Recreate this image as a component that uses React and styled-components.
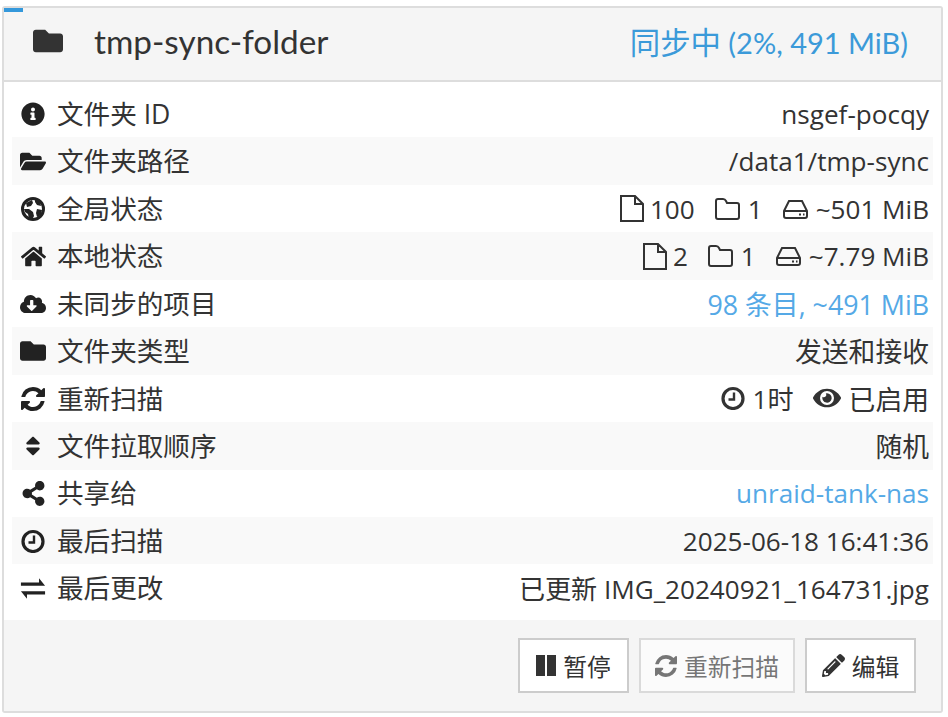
import React from "react"
import styled, { createGlobalStyle } from "styled-components"
import {
  FaInfoCircle, FaFolderOpen, FaHome, FaCloudDownloadAlt, FaFolder,
  FaSort, FaShareAlt, FaPencilAlt, FaEye,
} from "react-icons/fa"

const GlobalStyle = createGlobalStyle`
  html, body {
    margin: 0;
    background: #fff;
    font-family: "Open Sans", "Noto Sans CJK SC", sans-serif;
    color: #333;
  }
`

const Panel = styled.div`
  position: relative;
  box-sizing: border-box;
  width: 941px;
  height: 707px;
  margin: 6px 0 0 2px;
  border: 2px solid #ddd;
  border-radius: 3px;
  display: flex;
  flex-direction: column;
`

const Progress = styled.div`
  position: absolute;
  left: 0;
  top: 0;
  width: 19px;
  height: 4px;
  background: #3498db;
`

const Header = styled.div`
  box-sizing: border-box;
  height: 74px;
  padding: 0 33px 7px 29px;
  background: #f5f5f5;
  border-bottom: 2px solid #ddd;
  display: flex;
  align-items: center;
  justify-content: space-between;
`

const Title = styled.div`
  display: flex;
  align-items: center;
  gap: 31px;
  font-family: Lato, "Noto Sans CJK SC", sans-serif;
  font-size: 33.300px;
  color: #333;
`

const Status = styled.div`
  font-family: Lato, "Noto Sans CJK SC", sans-serif;
  font-size: 29px;
  color: #3b9ad9;
`

const StatusWord = styled.span`
  font-size: 30.400px;
`

const Body = styled.div`
  flex: 1;
  padding: 8px;
`

const Row = styled.div`
  box-sizing: border-box;
  height: 47.450px;
  padding: 0 4px 0 8px;
  display: flex;
  align-items: center;
  justify-content: space-between;
  font-size: 26.100px;
  white-space: nowrap;
  &:nth-child(even) {
    background: #f9f9f9;
  }
`

const Label = styled.div`
  display: flex;
  align-items: center;
  font-size: 26.600px;
  line-height: 1;
  padding-top: 1px;
`

const IconSlot = styled.span`
  width: 26px;
  margin-right: 11px;
  flex: none;
  display: flex;
  justify-content: center;
  color: #222;
  svg { display: block; }
`

const Value = styled.div`
  display: flex;
  align-items: center;
  font-size: ${(p) => (p.$cjk ? "26.800px" : "inherit")};
  color: ${(p) => (p.$accent ? "#55a9e6" : "#333")};
`

const Stat = styled.span`
  display: inline-flex;
  align-items: center;
  gap: ${(p) => (p.$tight ? 6 : 8)}px;
  margin-left: ${(p) => p.$gap || 0}px;
  font-size: ${(p) => (p.$cjk ? "26.800px" : "inherit")};
  svg { display: block; }
`

const Footer = styled.div`
  box-sizing: border-box;
  height: 91px;
  padding: 18px 25px 0 0;
  background: #f5f5f5;
  display: flex;
  justify-content: flex-end;
  gap: 10px;
`

const Button = styled.div`
  box-sizing: border-box;
  height: 55px;
  width: ${(p) => p.$w}px;
  border: 2px solid #ccc;
  background: #fff;
  display: flex;
  align-items: center;
  justify-content: center;
  gap: 7px;
  font-size: 23.750px;
  color: #333;
  opacity: ${(p) => (p.$disabled ? 0.65 : 1)};
`

// FontAwesome 4 glyphs that react-icons no longer ships
const Refresh = ({ size = 24 }) => (
  <svg width={size} height={size} viewBox="0 0 1536 1536" fill="currentColor">
    <path d="M1511 928q0 5-1 7-64 268-268 434.500T764 1536q-146 0-282.500-55T238 1324l-129 129q-19 19-45 19t-45-19-19-45V960q0-26 19-45t45-19h448q26 0 45 19t19 45-19 45l-137 137q71 66 161 102t187 36q134 0 250-65t186-179q11-17 53-117 8-23 30-23h192q13 0 22.500 9.500t9.500 22.500zm25-800v448q0 26-19 45t-45 19h-448q-26 0-45-19t-19-45 19-45l138-138Q969 256 768 256q-134 0-250 65T332 500q-11 17-53 117-8 23-30 23H50q-13 0-22.500-9.500T18 608v-7q65-268 270-434.500T768 0q146 0 284 55.500T1297 212l130-129q19-19 45-19t45 19 19 45z" />
  </svg>
)

const Clock = ({ size = 24 }) => (
  <svg width={size} height={size} viewBox="0 0 24 24" fill="none" stroke="currentColor" strokeWidth="3.200">
    <circle cx="12" cy="12.500" r="10" />
    <path d="M13 6.500v7H7.500" strokeWidth="2.400" />
  </svg>
)

const Exchange = ({ size = 29 }) => (
  <svg width={size} height={size} viewBox="0 0 28 28" fill="currentColor">
    <path d="M1 17h26v3.500H7.500V25zM27 11H1V7.500h19.500V3z" />
  </svg>
)

const Globe = ({ size = 24 }) => (
  <svg width={size} height={size} viewBox="0 0 24 24">
    <circle cx="12" cy="12" r="10.500" fill="#fff" stroke="currentColor" strokeWidth="3" />
    <path fill="currentColor" d="M5 6l6-3 1 3-2 3-4 1zM14 2l5 3 1 4-4-1-2-3zM3 12l5 0 4 3 1 4-2 4-3-1-1-5-3-2zM16 12l5 1-1 5-4 2-1-4z" />
  </svg>
)

const FileOutline = ({ size = 27 }) => (
  <svg width={size - 3} height={size} viewBox="0 0 24 27" fill="none" stroke="currentColor" strokeWidth="2">
    <path d="M1 1h14l8 8v17H1zM15 1v8h8" />
  </svg>
)

const FolderOutline = ({ size = 25 }) => (
  <svg width={size} height={size - 3} viewBox="0 0 25 22" fill="none" stroke="currentColor" strokeWidth="2">
    <path d="M1 5V3q0-2 2-2h5q2 0 3 2l1 2h10q2 0 2 2v12q0 2-2 2H3q-2 0-2-2z" />
  </svg>
)

const Disk = ({ size = 25 }) => (
  <svg width={size} height={size - 5} viewBox="0 0 25 20" fill="none" stroke="currentColor" strokeWidth="2">
    <path d="M1 12 6 2h13l5 10v5q0 2-2 2H3q-2 0-2-2zM1 12h23" />
    <path d="M16 15.500h2M20 15.500h1.500" strokeWidth="2.200" />
  </svg>
)

const PauseBars = () => (
  <svg width="20" height="21" viewBox="0 0 20 21" fill="currentColor">
    <path d="M0 0h9v21H0zM11 0h9v21h-9z" />
  </svg>
)

const rows = [
  { icon: <FaInfoCircle size={24} />, label: "文件夹 ID", value: "nsgef-pocqy" },
  { icon: <FaFolderOpen size={29} />, label: "文件夹路径", value: "/data1/tmp-sync" },
  {
    icon: <Globe />,
    label: "全局状态",
    value: (
      <>
        <Stat $tight><FileOutline />100</Stat>
        <Stat $gap={20}><FolderOutline />1</Stat>
        <Stat $gap={20}><Disk />~501 MiB</Stat>
      </>
    ),
  },
  {
    icon: <FaHome size={25} />,
    label: "本地状态",
    value: (
      <>
        <Stat $tight><FileOutline />2</Stat>
        <Stat $gap={20}><FolderOutline />1</Stat>
        <Stat $gap={20}><Disk />~7.79 MiB</Stat>
      </>
    ),
  },
  { icon: <FaCloudDownloadAlt size={30} />, label: "未同步的项目", value: "98 条目, ~491 MiB", accent: true, cjk: true },
  { icon: <FaFolder size={26} />, label: "文件夹类型", value: "发送和接收", cjk: true },
  {
    icon: <Refresh />,
    label: "重新扫描",
    value: (
      <>
        <Stat><Clock />1时</Stat>
        <Stat $gap={19} $cjk><FaEye size={28} />已启用</Stat>
      </>
    ),
  },
  { icon: <FaSort size={24} />, label: "文件拉取顺序", value: "随机", cjk: true },
  { icon: <FaShareAlt size={25} />, label: "共享给", value: "unraid-tank-nas", accent: true },
  { icon: <Clock />, label: "最后扫描", value: "2025-06-18 16:41:36" },
  { icon: <Exchange />, label: "最后更改", value: "已更新 IMG_20240921_164731.jpg" },
]

export default function App() {
  return (
    <>
      <GlobalStyle />
      <Panel>
        <Progress />
        <Header>
          <Title>
            <FaFolder size={30} />
            tmp-sync-folder
          </Title>
          <Status><StatusWord>同步中</StatusWord> (2%, 491 MiB)</Status>
        </Header>
        <Body>
          {rows.map((r) => (
            <Row key={r.label}>
              <Label>
                <IconSlot>{r.icon}</IconSlot>
                {r.label}
              </Label>
              <Value $accent={r.accent} $cjk={r.cjk}>{r.value}</Value>
            </Row>
          ))}
        </Body>
        <Footer>
          <Button $w={111}><PauseBars />暂停</Button>
          <Button $w={156} $disabled><Refresh size={22} />重新扫描</Button>
          <Button $w={111}><FaPencilAlt size={23} />编辑</Button>
        </Footer>
      </Panel>
    </>
  )
}
